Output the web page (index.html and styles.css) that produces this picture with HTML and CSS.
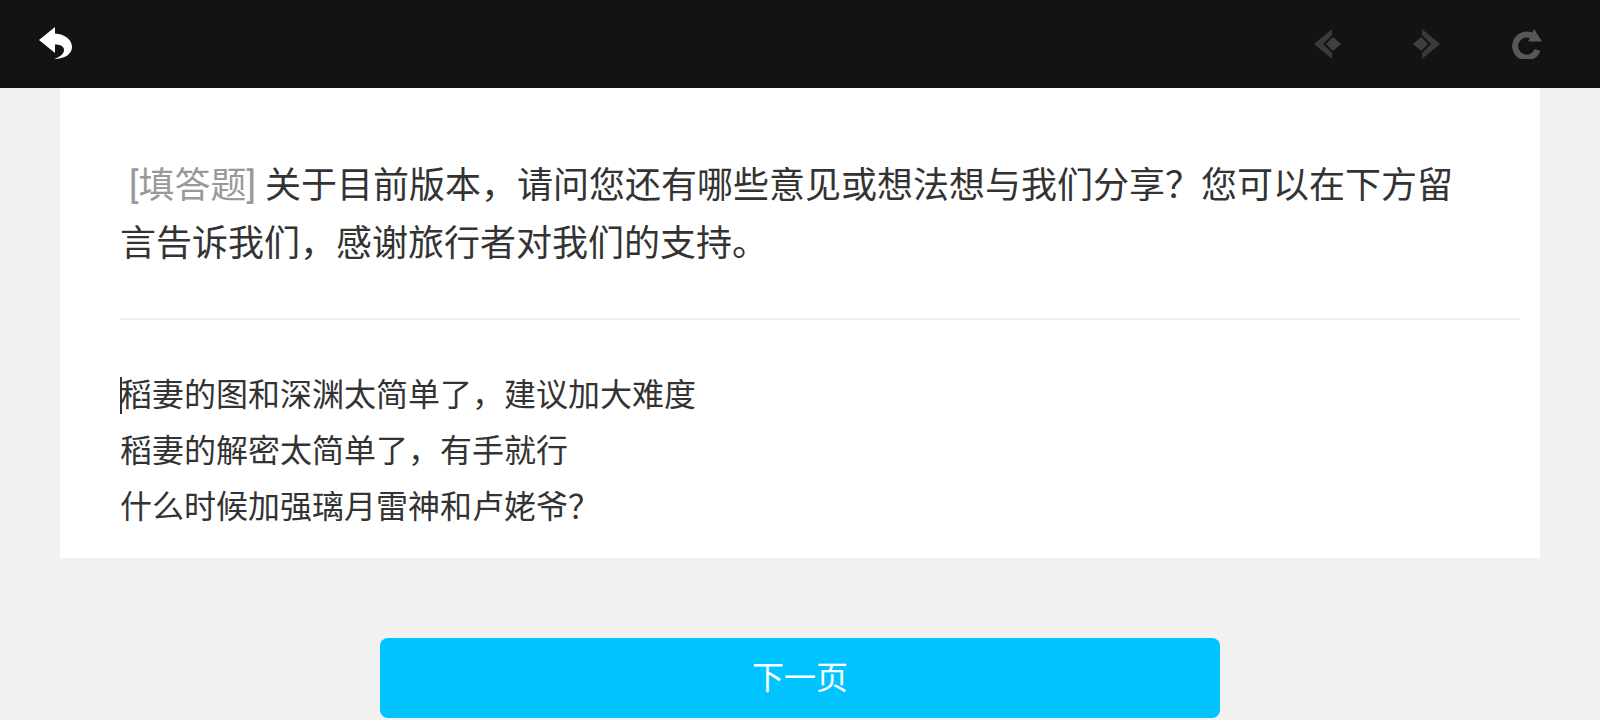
FILE: index.html
```html
<!DOCTYPE html>
<html lang="zh-CN">
<head>
    <meta charset="UTF-8">
    <meta name="viewport" content="width=device-width, initial-scale=1.0">
    <title>问卷</title>
    <link rel="stylesheet" href="styles.css">
</head>
<body>
    <div class="nav">
        <svg class="icon-back" viewBox="0 0 34 34">
            <path fill="#fff" d="M0 13 L16 0 L16 6.5 C26 7 33 13 33 20 C33 27 26 32 15 32 C21 30 25 27 25 23 C25 19 21 17.5 16 17.5 L16 26 Z"/>
        </svg>
        <div class="nav-tools">
            <svg class="icon" viewBox="0 0 30 30">
                <path fill="#3a3a3a" d="M0 15 L18 0 L18 6 L9 15 L18 24 L18 30 Z"/>
                <path fill="#3f3f3f" d="M12 15 L19 8 L27 15 L19 22 Z"/>
            </svg>
            <svg class="icon" viewBox="0 0 30 30">
                <path fill="#3a3a3a" d="M27 15 L9 0 L9 6 L18 15 L9 24 L9 30 Z"/>
                <path fill="#3f3f3f" d="M15 15 L8 8 L0 15 L8 22 Z"/>
            </svg>
            <svg class="icon" viewBox="0 0 30 30">
                <path fill="none" stroke="#585858" stroke-width="6" d="M21 7.5 A11.5 11.5 0 1 0 25.5 21"/>
                <path fill="#585858" d="M16 12.5 L22 0 L30 12.5 Z"/>
            </svg>
        </div>
    </div>

    <div class="card">
        <div class="question"><span class="tag">&nbsp;[填答题]</span> 关于目前版本，请问您还有哪些意见或想法想与我们分享？您可以在下方留言告诉我们，感谢旅行者对我们的支持。</div>
        <div class="answer">
            <span class="caret"></span>
            <div>稻妻的图和深渊太简单了，建议加大难度</div>
            <div>稻妻的解密太简单了，有手就行</div>
            <div>什么时候加强璃月雷神和卢姥爷？</div>
        </div>
    </div>

    <button class="next">下一页</button>
</body>
</html>
```

FILE: styles.css
```css
html, body {
    height: 720px;
    overflow: hidden;
}
body {
    margin: 0;
    background-color: #f1f1f1;
    font-family: Roboto, "Noto Sans CJK SC", sans-serif;
    color: #333;
}
.nav {
    height: 88px;
    padding: 0 58px 0 39px;
    display: flex;
    align-items: center;
    justify-content: space-between;
    background-color: #121315;
}
.nav-tools {
    display: flex;
    gap: 69px;
}
.icon-back {
    width: 34px;
    height: 34px;
}
.icon {
    display: block;
    width: 30px;
    height: 30px;
}
.card {
    margin: 0 60px;
    padding: 69px 20px 23px 60px;
    background-color: #fff;
}
.question {
    padding: 0 40px 45px 0;
    border-bottom: 2px solid #f0f0f0;
    font-size: 36px;
    line-height: 58px;
}
.tag {
    color: #999;
}
.answer {
    position: relative;
    margin-top: 47px;
    font-size: 32px;
    line-height: 56px;
}
.caret {
    position: absolute;
    left: 0;
    top: 10px;
    width: 2px;
    height: 37px;
    background-color: #333;
}
.next {
    display: block;
    width: 840px;
    height: 80px;
    margin: 80px auto 0;
    padding: 0 0 6px;
    border: 0;
    border-radius: 8px;
    background-color: #00c3ff;
    color: #fff;
    font-family: inherit;
    font-size: 32px;
}
```
